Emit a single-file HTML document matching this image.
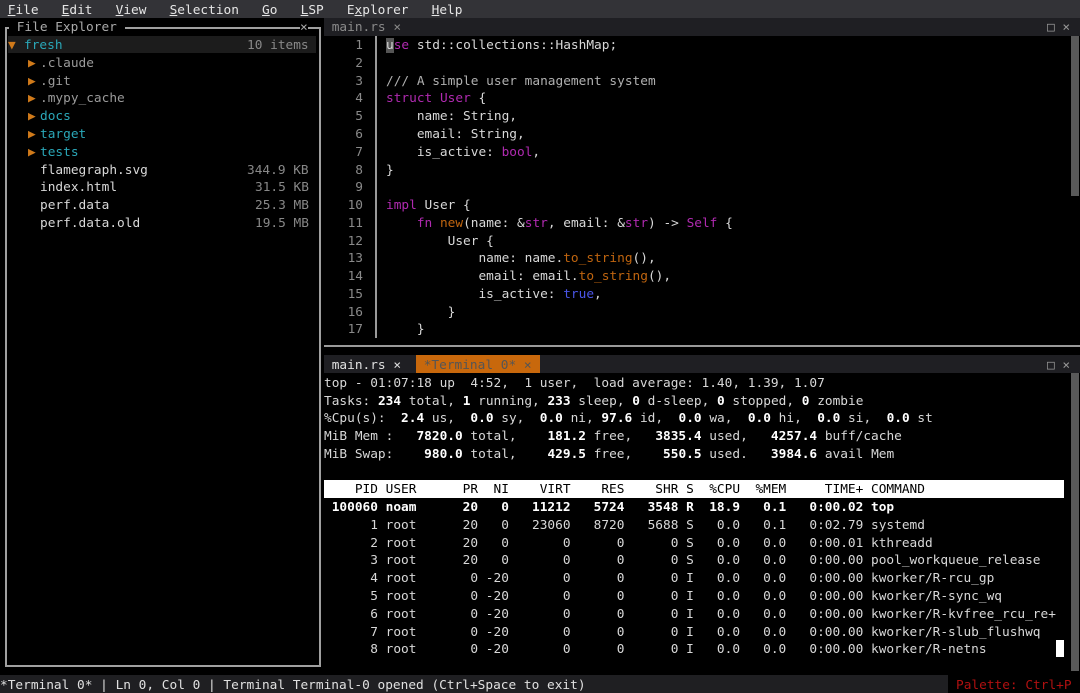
<!DOCTYPE html>
<html><head><meta charset="utf-8"><style>
html,body{margin:0;padding:0;background:#000;width:1080px;height:693px;overflow:hidden}
body{position:relative;font-family:"DejaVu Sans Mono","Liberation Mono",monospace;font-size:12.8px;color:#d8d8d8}
.r{position:absolute;white-space:pre;height:16.27px;padding-top:1.5px;line-height:17.77px}
.u{text-decoration:underline}
.cy{color:#2aa7b8}.or{color:#d07a1a}.gr{color:#9a9a9a}.dg{color:#888}
.kw{color:#b02ab0}.fn{color:#c0650f}.bl{color:#4a55e8}.cm{color:#b0b0b0}
b{color:#fff;font-weight:bold}
.ln{color:#8a8a8a;text-align:right;width:30px}
</style></head><body>
<!-- menu bar -->
<div class="r" style="top:0;left:0;width:1080px;background:#333337;color:#e6e6e6"> <span class="u">F</span>ile   <span class="u">E</span>dit   <span class="u">V</span>iew   <span class="u">S</span>election   <span class="u">G</span>o   <span class="u">L</span>SP   E<span class="u">x</span>plorer   <span class="u">H</span>elp</div>
<!-- left panel border -->
<div style="position:absolute;left:5px;top:27px;width:312px;height:636px;border:2px solid #a0a0a0"></div>
<div class="r" style="top:17.77px;left:9px;background:#000;color:#aaa"> File Explorer </div>
<div class="r" style="top:17.77px;left:300px;background:#000;color:#aaa">×</div>
<div class="r" style="top:35.5px;left:8px;width:308px;background:#1c1c1c"></div>
<div class="r or" style="top:35.5px;left:8px">▼</div>
<div class="r cy" style="top:35.5px;left:24px">fresh</div>
<div class="r dg" style="top:35.5px;left:247px">10 items</div>
<div class="r or" style="top:53.3px;left:28px">▶</div><div class="r gr" style="top:53.3px;left:40px">.claude</div>
<div class="r or" style="top:71.1px;left:28px">▶</div><div class="r gr" style="top:71.1px;left:40px">.git</div>
<div class="r or" style="top:88.9px;left:28px">▶</div><div class="r gr" style="top:88.9px;left:40px">.mypy_cache</div>
<div class="r or" style="top:106.6px;left:28px">▶</div><div class="r cy" style="top:106.6px;left:40px">docs</div>
<div class="r or" style="top:124.4px;left:28px">▶</div><div class="r cy" style="top:124.4px;left:40px">target</div>
<div class="r or" style="top:142.2px;left:28px">▶</div><div class="r cy" style="top:142.2px;left:40px">tests</div>
<div class="r" style="top:160px;left:40px">flamegraph.svg</div><div class="r dg" style="top:160px;left:247px">344.9 KB</div>
<div class="r" style="top:177.7px;left:40px">index.html</div><div class="r dg" style="top:177.7px;left:255px">31.5 KB</div>
<div class="r" style="top:195.5px;left:40px">perf.data</div><div class="r dg" style="top:195.5px;left:255px">25.3 MB</div>
<div class="r" style="top:213.2px;left:40px">perf.data.old</div><div class="r dg" style="top:213.2px;left:255px">19.5 MB</div>
<!-- editor tab bar -->
<div class="r" style="top:17.77px;left:324px;width:756px;background:#1f1f23"></div>
<div class="r" style="top:17.77px;left:324px;color:#8a8a8a"> main.rs × </div>
<div class="r" style="top:17.77px;left:1047px;color:#999">□ ×</div>
<!-- editor -->
<div style="position:absolute;left:375px;top:36px;width:2px;height:302px;background:#9a9a9a"></div>
<div style="position:absolute;left:1071px;top:36px;width:8px;height:160px;background:#5a5a5a"></div>
<div class="r ln" style="top:35.5px;left:333px">1</div><div class="r" style="top:35.5px;left:386px"><span style="background:#555">u</span><span class="kw">se</span> std::collections::HashMap;</div>
<div class="r ln" style="top:53.3px;left:333px">2</div>
<div class="r ln" style="top:71.1px;left:333px">3</div><div class="r cm" style="top:71.1px;left:386px">/// A simple user management system</div>
<div class="r ln" style="top:88.9px;left:333px">4</div><div class="r" style="top:88.9px;left:386px"><span class="kw">struct</span> <span class="kw">User</span> {</div>
<div class="r ln" style="top:106.6px;left:333px">5</div><div class="r" style="top:106.6px;left:386px">    name: String,</div>
<div class="r ln" style="top:124.4px;left:333px">6</div><div class="r" style="top:124.4px;left:386px">    email: String,</div>
<div class="r ln" style="top:142.2px;left:333px">7</div><div class="r" style="top:142.2px;left:386px">    is_active: <span class="kw">bool</span>,</div>
<div class="r ln" style="top:160px;left:333px">8</div><div class="r" style="top:160px;left:386px">}</div>
<div class="r ln" style="top:177.7px;left:333px">9</div>
<div class="r ln" style="top:195.5px;left:333px">10</div><div class="r" style="top:195.5px;left:386px"><span class="kw">impl</span> User {</div>
<div class="r ln" style="top:213.2px;left:333px">11</div><div class="r" style="top:213.2px;left:386px">    <span class="kw">fn</span> <span class="fn">new</span>(name: &amp;<span class="kw">str</span>, email: &amp;<span class="kw">str</span>) -&gt; <span class="kw">Self</span> {</div>
<div class="r ln" style="top:231px;left:333px">12</div><div class="r" style="top:231px;left:386px">        User {</div>
<div class="r ln" style="top:248.8px;left:333px">13</div><div class="r" style="top:248.8px;left:386px">            name: name.<span class="fn">to_string</span>(),</div>
<div class="r ln" style="top:266.6px;left:333px">14</div><div class="r" style="top:266.6px;left:386px">            email: email.<span class="fn">to_string</span>(),</div>
<div class="r ln" style="top:284.3px;left:333px">15</div><div class="r" style="top:284.3px;left:386px">            is_active: <span class="bl">true</span>,</div>
<div class="r ln" style="top:302.1px;left:333px">16</div><div class="r" style="top:302.1px;left:386px">        }</div>
<div class="r ln" style="top:319.9px;left:333px">17</div><div class="r" style="top:319.9px;left:386px">    }</div>
<!-- separator -->
<div style="position:absolute;left:324px;top:345px;width:756px;height:2px;background:#9a9a9a"></div>
<!-- terminal tab bar -->
<div class="r" style="top:355.4px;left:324px;width:756px;background:#1f1f23"></div>
<div class="r" style="top:355.4px;left:324px;color:#e0e0e0"> main.rs × </div>
<div class="r" style="top:355.4px;left:416px;width:124px;background:#c8680c;color:#555"> *Terminal 0* ×</div>
<div class="r" style="top:355.4px;left:1047px;color:#999">□ ×</div>
<div style="position:absolute;left:1071px;top:373px;width:8px;height:298px;background:#5a5a5a"></div>
<!-- terminal -->
<div class="r" style="top:373.2px;left:324px">top - 01:07:18 up  4:52,  1 user,  load average: 1.40, 1.39, 1.07</div>
<div class="r" style="top:391px;left:324px">Tasks: <b>234</b> total, <b>1</b> running, <b>233</b> sleep, <b>0</b> d-sleep, <b>0</b> stopped, <b>0</b> zombie</div>
<div class="r" style="top:408.7px;left:324px">%Cpu(s): <b> 2.4</b> us, <b> 0.0</b> sy, <b> 0.0</b> ni, <b>97.6</b> id, <b> 0.0</b> wa, <b> 0.0</b> hi, <b> 0.0</b> si, <b> 0.0</b> st</div>
<div class="r" style="top:426.5px;left:324px">MiB Mem :   <b>7820.0</b> total,    <b>181.2</b> free,   <b>3835.4</b> used,   <b>4257.4</b> buff/cache</div>
<div class="r" style="top:444.3px;left:324px">MiB Swap:    <b>980.0</b> total,    <b>429.5</b> free,    <b>550.5</b> used.   <b>3984.6</b> avail Mem</div>
<div class="r" style="top:479.8px;left:324px;width:740px;background:#fff;color:#000">    PID USER      PR  NI    VIRT    RES    SHR S  %CPU  %MEM     TIME+ COMMAND</div>
<div class="r" style="top:497.6px;left:324px"><b> 100060 noam      20   0   11212   5724   3548 R  18.9   0.1   0:00.02 top</b></div>
<div class="r" style="top:515.4px;left:324px">      1 root      20   0   23060   8720   5688 S   0.0   0.1   0:02.79 systemd</div>
<div class="r" style="top:533.1px;left:324px">      2 root      20   0       0      0      0 S   0.0   0.0   0:00.01 kthreadd</div>
<div class="r" style="top:550.9px;left:324px">      3 root      20   0       0      0      0 S   0.0   0.0   0:00.00 pool_workqueue_release</div>
<div class="r" style="top:568.7px;left:324px">      4 root       0 -20       0      0      0 I   0.0   0.0   0:00.00 kworker/R-rcu_gp</div>
<div class="r" style="top:586.4px;left:324px">      5 root       0 -20       0      0      0 I   0.0   0.0   0:00.00 kworker/R-sync_wq</div>
<div class="r" style="top:604.2px;left:324px">      6 root       0 -20       0      0      0 I   0.0   0.0   0:00.00 kworker/R-kvfree_rcu_re+</div>
<div class="r" style="top:622px;left:324px">      7 root       0 -20       0      0      0 I   0.0   0.0   0:00.00 kworker/R-slub_flushwq</div>
<div class="r" style="top:639.8px;left:324px">      8 root       0 -20       0      0      0 I   0.0   0.0   0:00.00 kworker/R-netns</div>
<div style="position:absolute;left:1056px;top:640px;width:8px;height:17px;background:#fff"></div>
<!-- status bar -->
<div class="r" style="top:675.2px;left:0;width:948px;background:#1f1f22;color:#e0e0e0">*Terminal 0* | Ln 0, Col 0 | Terminal Terminal-0 opened (Ctrl+Space to exit)</div>
<div class="r" style="top:675.2px;left:956px;color:#b01010">Palette: Ctrl+P</div>
</body></html>
